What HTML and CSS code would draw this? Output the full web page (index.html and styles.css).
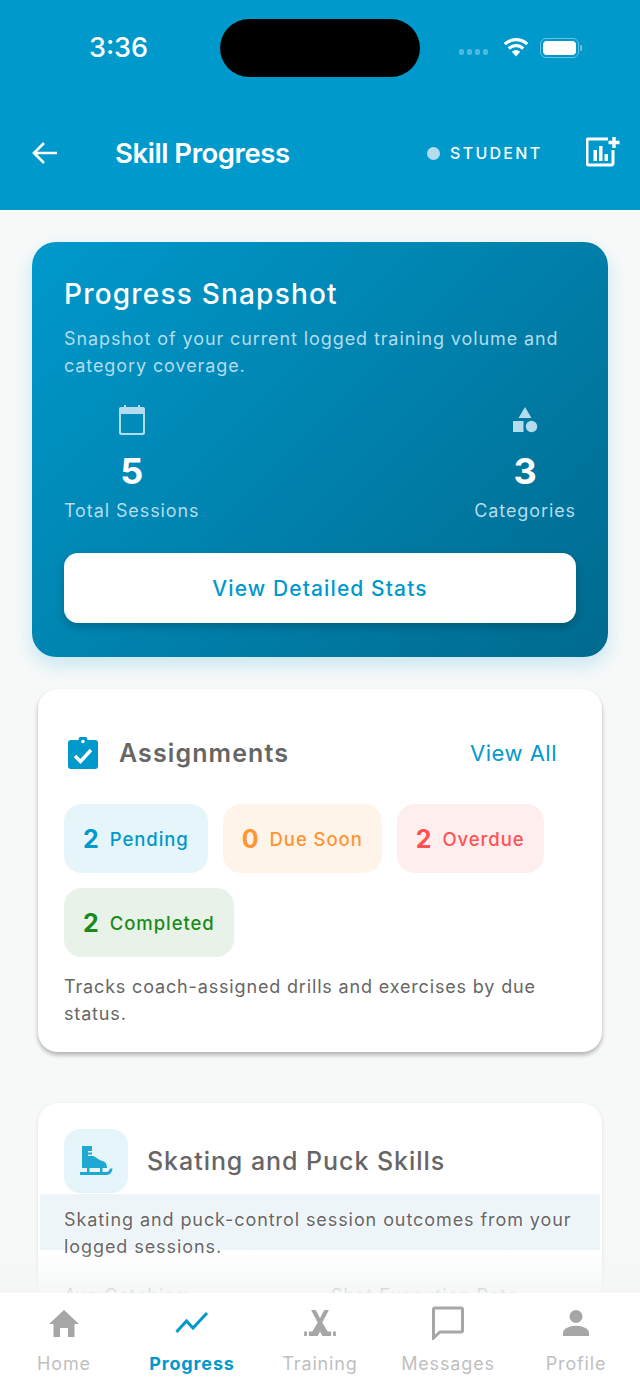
FILE: index.html
```html
<!DOCTYPE html>
<html lang="en">
<head>
    <meta charset="UTF-8">
    <meta name="viewport" content="width=device-width, initial-scale=1.0">
    <title>Skill Progress</title>
    <link rel="stylesheet" href="styles.css">
</head>
<body>

<header class="header">
    <div class="status-bar">
        <span class="time">3:36</span>
        <span class="island"></span>
        <div class="status-icons">
            <span class="cell-dots"><i></i><i></i><i></i><i></i></span>
            <svg class="wifi" viewBox="0 0 26 20" width="26" height="20"><path d="M13 19.5 8.8 14.8a6 6 0 0 1 8.4 0z" fill="#fff"/><path d="M5.8 11.6a10.3 10.3 0 0 1 14.4 0M1.8 7.2a16 16 0 0 1 22.4 0" fill="none" stroke="#fff" stroke-width="3.2"/></svg>
            <span class="battery"><span class="battery-fill"></span></span>
        </div>
    </div>
    <div class="app-bar">
        <svg class="back" viewBox="0 0 26 24" width="26" height="24"><path d="M25 12H2.5M12 2 2 12l10 10" fill="none" stroke="#fff" stroke-width="2.6"/></svg>
        <h1 class="title">Skill Progress</h1>
        <span class="role-dot"></span>
        <span class="role">STUDENT</span>
        <svg class="add-stat" viewBox="0 0 34 30" width="34" height="30"><path d="M22 2H2.5a1.500 1.500 0 0 0-1.500 1.500v23A1.500 1.500 0 0 0 2.500 28h23a1.500 1.500 0 0 0 1.500-1.500V13" fill="none" stroke="#fff" stroke-width="3"/><path d="M7.500 13h3.500v11H7.500zM13 9h3.500v15H13zM18.500 17H22v7h-3.500z" fill="#fff"/><path d="M28 0v11M22.500 5.500h11" stroke="#fff" stroke-width="3.400"/></svg>
    </div>
</header>

<main class="content">
    <section class="hero">
        <h2 class="hero-title">Progress Snapshot</h2>
        <p class="hero-text">Snapshot of your current logged training volume and category coverage.</p>
        <div class="hero-stats">
            <div class="stat">
                <svg viewBox="0 0 26 30" width="26" height="30"><path d="M5 0h2v3H5zM19 0h2v3h-2z" fill="#b3dced"/><path d="M2 2h22a2 2 0 0 1 2 2v24a2 2 0 0 1-2 2H2a2 2 0 0 1-2-2V4a2 2 0 0 1 2-2zm0 7v18a1 1 0 0 0 1 1h20a1 1 0 0 0 1-1V9z" fill="#b3dced" fill-rule="evenodd"/></svg>
                <span class="stat-num">5</span>
                <span class="stat-label">Total Sessions</span>
            </div>
            <div class="stat">
                <svg viewBox="0 0 26 30" width="26" height="30"><path d="M13 2l6.500 11h-13zM1 16h10.500v11H1z" fill="#b3dced"/><circle cx="19.500" cy="21.500" r="5.700" fill="#b3dced"/></svg>
                <span class="stat-num">3</span>
                <span class="stat-label">Categories</span>
            </div>
        </div>
        <button class="hero-btn" type="button">View Detailed Stats</button>
    </section>

    <section class="card assignments">
        <div class="card-head">
            <svg class="clip-icon" viewBox="0 0 30 32" width="30" height="32"><path d="M3 3h7.500a4.500 4.500 0 0 1 9 0H27a3 3 0 0 1 3 3v23a3 3 0 0 1-3 3H3a3 3 0 0 1-3-3V6a3 3 0 0 1 3-3z" fill="#0099cc"/><circle cx="15" cy="4.500" r="1.700" fill="#fff"/><path d="M7 19l5.500 5.500L23 13" fill="none" stroke="#fff" stroke-width="3.400"/></svg>
            <h3 class="card-title">Assignments</h3>
            <a class="view-all">View All</a>
        </div>
        <div class="chips">
            <div class="chip chip-blue"><b>2</b><span>Pending</span></div>
            <div class="chip chip-orange"><b>0</b><span>Due Soon</span></div>
            <div class="chip chip-red"><b>2</b><span>Overdue</span></div>
            <div class="chip chip-green"><b>2</b><span>Completed</span></div>
        </div>
        <p class="card-text">Tracks coach-assigned drills and exercises by due status.</p>
    </section>

    <section class="card skills">
        <div class="skills-head">
            <div class="skate-box">
                <svg viewBox="0 0 34 32" width="34" height="32"><path d="M3 1h10v5h-4v1.500h4v2h-4V11h5.500l7 4.500c4 .5 6.500 2.500 6.500 7.500H3z" fill="#1fa8d2"/><path d="M1 27h26c2 0 3.500-1 4-3.500h2.500c-.5 4.500-3 6.500-6.500 6.500H1z" fill="#1fa8d2"/><path d="M8 23h2.500v4H8zM21 23h2.500v4H21z" fill="#1fa8d2"/></svg>
            </div>
            <h3 class="skills-title">Skating and Puck Skills</h3>
        </div>
        <div class="skills-band">
            <p class="card-text">Skating and puck-control session outcomes from your logged sessions.</p>
        </div>
        <div class="metrics">
            <span>Avg Catching</span>
            <span>Shot Execution Rate</span>
        </div>
    </section>
    <div class="fade"></div>
</main>

<nav class="tabbar">
    <div class="tab">
        <div class="tab-icon"><svg viewBox="0 0 30 30" width="30" height="30"><path d="M15 2 0 16h4.500v13H11v-9h8v9h6.500V16H30z" fill="#a6a6a6"/></svg></div>
        <span>Home</span>
    </div>
    <div class="tab tab-on">
        <div class="tab-icon"><svg viewBox="0 0 34 24" width="34" height="24"><path d="M1.500 21 11.500 10l6.500 7L32 2" fill="none" stroke="#0099cc" stroke-width="3"/></svg></div>
        <span>Progress</span>
    </div>
    <div class="tab">
        <div class="tab-icon"><svg viewBox="0 0 34 30" width="32" height="28"><path d="M7.500 1h5l4.500 9 4.500-9h5l-7 13.500L28 29h-8.500l-2.500-5-2.500 5H6l8.500-14.500z" fill="#a6a6a6"/><path d="M0 24h3v5H0zM31 24h3v5h-3zM5 24h9v5H5zM20 24h9v5h-9z" fill="#a6a6a6"/></svg></div>
        <span>Training</span>
    </div>
    <div class="tab">
        <div class="tab-icon"><svg viewBox="0 0 32 34" width="32" height="34"><path d="M3 2h26a1.500 1.500 0 0 1 1.500 1.500v21A1.500 1.500 0 0 1 29 26H8l-6.500 6V3.500A1.500 1.500 0 0 1 3 2z" fill="none" stroke="#a6a6a6" stroke-width="3"/></svg></div>
        <span>Messages</span>
    </div>
    <div class="tab">
        <div class="tab-icon"><svg viewBox="0 0 28 30" width="26" height="28"><circle cx="14" cy="8" r="7" fill="#a6a6a6"/><path d="M0 29v-3c0-5 7-8 14-8s14 3 14 8v3z" fill="#a6a6a6"/></svg></div>
        <span>Profile</span>
    </div>
</nav>

</body>
</html>
```

FILE: styles.css
```css
* {
    box-sizing: border-box;
}

body {
    margin: 0;
    height: 1385px;
    display: flex;
    flex-direction: column;
    overflow: hidden;
    font-family: Inter, "Liberation Sans", sans-serif;
    background-color: #f7f9f9;
}

h1, h2, h3, p {
    margin: 0;
}

/* top blue area */
.header {
    height: 210px;
    flex-shrink: 0;
    background-color: #0099cc;
    color: #fff;
    padding-top: 19px;
}

.status-bar {
    height: 58px;
    display: flex;
    align-items: center;
    padding-left: 89px;
}

.time {
    width: 131px;
    font-size: 27px;
    font-weight: 500;
    line-height: 60px;
}

.island {
    width: 200px;
    height: 58px;
    border-radius: 29px;
    background-color: #000;
}

.status-icons {
    display: flex;
    align-items: center;
    margin-left: 39px;
}

.cell-dots {
    display: flex;
    gap: 3px;
    margin-top: 8px;
}

.cell-dots i {
    width: 5px;
    height: 6px;
    border-radius: 2px;
    background-color: #4db8db;
}

.wifi {
    margin-left: 15px;
    margin-top: -2px;
}

.battery {
    width: 39px;
    height: 20px;
    margin-left: 11px;
    padding: 2px;
    border: 1px solid #66c2e0;
    border-radius: 6px;
    position: relative;
}

.battery::after {
    content: "";
    position: absolute;
    right: -4px;
    top: 6px;
    width: 2px;
    height: 6px;
    border-radius: 1px;
    background-color: #66c2e0;
}

.battery-fill {
    display: block;
    height: 100%;
    border-radius: 4px;
    background-color: #fff;
}

.app-bar {
    display: flex;
    align-items: center;
    height: 60px;
    margin-top: 46px;
    padding-left: 32px;
}

.title {
    width: 312px;
    margin-left: 57px;
    font-size: 27.500px;
    font-weight: 600;
    letter-spacing: -0.450px;
}

.role-dot {
    width: 13px;
    height: 13px;
    border-radius: 50%;
    background-color: #b3dced;
}

.role {
    width: 136px;
    margin-left: 10px;
    font-size: 16px;
    font-weight: 500;
    letter-spacing: 2.300px;
}

.add-stat {
    margin-top: -2px;
}

.content {
    flex: 1;
    min-height: 0;
    overflow: hidden;
    position: relative;
    padding-top: 32px;
}

.hero {
    margin: 0 32px;
    height: 415px;
    padding: 32px;
    border-radius: 24px;
    background: linear-gradient(135deg, #0099cc, #006a8e);
    box-shadow: 0 8px 20px rgba(0, 153, 204, 0.2);
    color: #fff;
}

.hero-title {
    font-size: 28px;
    font-weight: 500;
    letter-spacing: 1.200px;
    line-height: 40px;
}

.hero-text {
    margin-top: 11px;
    font-size: 18px;
    letter-spacing: 0.900px;
    line-height: 27px;
    color: #b3dced;
}

.hero-stats {
    display: flex;
    justify-content: space-between;
    margin-top: 26px;
}

.stat {
    display: flex;
    flex-direction: column;
    align-items: center;
}

.stat-num {
    font-size: 36px;
    font-weight: 700;
    line-height: 40px;
    margin-top: 16px;
}

.stat-label {
    font-size: 18px;
    letter-spacing: 0.900px;
    line-height: 28px;
    margin-top: 6px;
    color: #b3dced;
}

.hero-btn {
    display: block;
    width: 100%;
    height: 70px;
    margin-top: 28px;
    border: none;
    border-radius: 14px;
    background-color: #fff;
    color: #0099cc;
    font-family: Inter, sans-serif;
    font-size: 21px;
    font-weight: 500;
    letter-spacing: 1.100px;
    box-shadow: 0 4px 8px rgba(0, 0, 0, 0.2);
}

.card {
    margin: 0 38px;
    background-color: #fff;
    border-radius: 20px;
}

.assignments {
    height: 363px;
    margin-top: 32px;
    padding: 46px 26px 0;
    box-shadow: 0 3px 4px rgba(0, 0, 0, 0.28);
}

.card-head {
    display: flex;
    align-items: center;
    height: 36px;
    padding-left: 4px;
}

.card-title {
    margin-left: 21px;
    font-size: 25px;
    font-weight: 600;
    letter-spacing: 1.100px;
    color: #666;
}

.view-all {
    margin-left: auto;
    margin-right: 19px;
    font-size: 22px;
    letter-spacing: 0.500px;
    color: #0099cc;
}

.chips {
    display: flex;
    flex-wrap: wrap;
    gap: 15px;
    margin-top: 33px;
}

.chip {
    display: flex;
    align-items: center;
    height: 69px;
    padding: 0 19px;
    border-radius: 18px;
    font-size: 18.500px;
    font-weight: 500;
    letter-spacing: 0.930px;
}

.chip b {
    font-size: 25px;
    font-weight: 700;
    letter-spacing: 0;
    margin-right: 11px;
}

.chip-blue {
    background-color: #e6f5fa;
    color: #0099cc;
}

.chip-orange {
    background-color: #fff4ea;
    color: #ff9533;
}

.chip-red {
    background-color: #ffeeee;
    color: #ff5252;
}

.chip-green {
    background-color: #e9f2e9;
    color: #1a8a1a;
}

.card-text {
    font-size: 18px;
    letter-spacing: 0.880px;
    line-height: 27px;
    color: #666;
}

.assignments .card-text {
    margin-top: 16px;
    letter-spacing: 0.840px;
}

.skills {
    margin-top: 51px;
    height: 300px;
    box-shadow: 0 1px 3px rgba(0, 0, 0, 0.14);
}

.skills-head {
    display: flex;
    align-items: center;
    height: 91px;
    padding: 25px 26px 0;
}

.skate-box {
    width: 64px;
    height: 64px;
    display: flex;
    align-items: center;
    justify-content: center;
    border-radius: 16px;
    background-color: #e6f5fa;
}

.skills-title {
    margin-left: 19px;
    font-size: 25px;
    font-weight: 500;
    letter-spacing: 0.950px;
    color: #666;
}

.skills-band {
    height: 56px;
    margin: 0 2px;
    padding: 12px 24px 0;
    background-color: #eef5f9;
}

.skills-band .card-text {
    letter-spacing: 0.920px;
    text-shadow: 0 0 2px #fff, 0 0 2px #fff;
}

.metrics {
    display: flex;
    padding: 35px 26px 0;
    font-size: 18px;
    letter-spacing: 0.880px;
    color: #666;
}

.metrics span:first-child {
    flex: none;
    width: 267px;
}

/* content fades out behind the tab bar */
.fade {
    position: absolute;
    left: 0;
    right: 0;
    bottom: 0;
    height: 43px;
    background: linear-gradient(rgba(247, 249, 249, 0), rgba(244, 246, 246, 0.9));
}

.tabbar {
    height: 92px;
    flex-shrink: 0;
    display: flex;
    background-color: #fff;
    position: relative;
}

.tab {
    width: 128px;
    display: flex;
    flex-direction: column;
    align-items: center;
    justify-content: flex-end;
    padding-bottom: 11px;
    font-size: 18px;
    letter-spacing: 0.850px;
    color: #bfbfbf;
}

.tab-icon {
    height: 36px;
    display: flex;
    align-items: center;
    margin-bottom: 12px;
}

.tab-on {
    color: #0099cc;
    font-weight: 700;
}
```
